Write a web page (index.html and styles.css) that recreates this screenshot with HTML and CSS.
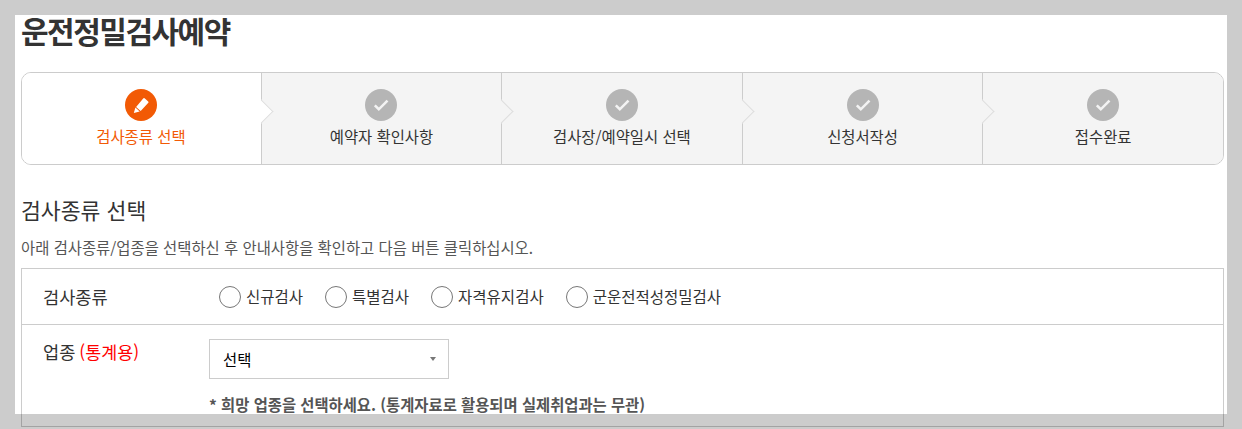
FILE: index.html
```html
<!DOCTYPE html>
<html lang="ko">
<head>
<meta charset="utf-8">
<title>운전정밀검사예약</title>
<link rel="stylesheet" href="styles.css">
</head>
<body>
<main class="page">
  <h1 class="title">운전정밀검사예약</h1>
  <ol class="steps">
    <li class="step step-active">
      <span class="step-icon">
        <svg viewBox="0 0 32 32" width="32" height="32"><path fill="#fff" d="M19.6 9.2l3.6 3.2a1 1 0 0 1 .1 1.4l-7.6 8.2-4.6-4.1 7.1-8.5a1 1 0 0 1 1.4-.2zM10.4 18.6l4.3 3.9-5.9 1.6z"/></svg>
      </span>
      <span class="step-label">검사종류 선택</span>
    </li>
    <li class="step">
      <span class="step-icon"><svg viewBox="0 0 32 32" width="32" height="32"><path fill="none" stroke="#f3f3f3" stroke-width="2.6" d="M9.8 16.4l4 3.9 8.7-8.6"/></svg></span>
      <span class="step-label">예약자 확인사항</span>
    </li>
    <li class="step">
      <span class="step-icon"><svg viewBox="0 0 32 32" width="32" height="32"><path fill="none" stroke="#f3f3f3" stroke-width="2.6" d="M9.8 16.4l4 3.9 8.7-8.6"/></svg></span>
      <span class="step-label">검사장/예약일시 선택</span>
    </li>
    <li class="step">
      <span class="step-icon"><svg viewBox="0 0 32 32" width="32" height="32"><path fill="none" stroke="#f3f3f3" stroke-width="2.6" d="M9.8 16.4l4 3.9 8.7-8.6"/></svg></span>
      <span class="step-label">신청서작성</span>
    </li>
    <li class="step">
      <span class="step-icon"><svg viewBox="0 0 32 32" width="32" height="32"><path fill="none" stroke="#f3f3f3" stroke-width="2.6" d="M9.8 16.4l4 3.9 8.7-8.6"/></svg></span>
      <span class="step-label">접수완료</span>
    </li>
  </ol>
  <h2 class="section-title">검사종류 선택</h2>
  <p class="section-desc">아래 검사종류/업종을 선택하신 후 안내사항을 확인하고 다음 버튼 클릭하십시오.</p>
  <div class="form">
    <div class="row row-type">
      <div class="row-label">검사종류</div>
      <div class="radios">
        <label class="radio"><input type="radio" name="kind"><span>신규검사</span></label>
        <label class="radio"><input type="radio" name="kind"><span>특별검사</span></label>
        <label class="radio"><input type="radio" name="kind"><span>자격유지검사</span></label>
        <label class="radio"><input type="radio" name="kind"><span>군운전적성정밀검사</span></label>
      </div>
    </div>
    <div class="row row-job">
      <div class="row-label">업종 <em class="red">(통계용)</em></div>
      <div class="job-field">
        <div class="select-wrap">
          <select class="select"><option>선택</option></select>
        </div>
        <p class="note">* 희망 업종을 선택하세요. (통계자료로 활용되며 실제취업과는 무관)</p>
      </div>
    </div>
  </div>
</main>
<div class="frame"></div>
</body>
</html>
```

FILE: styles.css
```css
* { box-sizing: border-box; }
html, body { margin: 0; padding: 0; height: 429px; overflow: hidden; background: #fff; }
body { font-family: "Noto Sans CJK KR", "Noto Sans", sans-serif; color: #333; position: relative; }

.frame {
  position: absolute;
  inset: 0;
  border: 15px solid rgba(0, 0, 0, 0.2);
  pointer-events: none;
}

.page { padding: 11px 18px 0 21px; }

.title {
  margin: 0;
  font-size: 30px;
  line-height: 38px;
  font-weight: 700;
  letter-spacing: -1.5px;
  color: #333;
}

.steps {
  list-style: none;
  margin: 23px 0 0;
  padding: 0;
  display: grid;
  grid-template-columns: 238.9px 240.1px 240.8px 240.5px 1fr;
  height: 93px;
  border: 1px solid #ccc;
  border-radius: 10px;
}
.step {
  position: relative;
  display: flex;
  flex-direction: column;
  align-items: center;
  padding-top: 16px;
  background: #f4f4f4;
  border-left: 1px solid #ccc;
}
.step:first-child { border-left: 0; padding-right: 1px; border-radius: 9px 0 0 9px; }
.step:last-child { border-radius: 0 9px 9px 0; }
.step:not(:first-child)::before {
  content: "";
  position: absolute;
  left: -9px;
  top: 30px;
  width: 16px;
  height: 16px;
  background: #f4f4f4;
  border-top: 1px solid #ddd;
  border-right: 1px solid #ddd;
  transform: rotate(45deg);
}
.step:nth-child(2)::before { background: #fff; }
.step-icon {
  width: 32px;
  height: 32px;
  border-radius: 50%;
  background: #b5b5b5;
  display: block;
}
.step-icon svg { display: block; }
.step-label {
  margin-top: 4px;
  font-size: 15.4px;
  line-height: 22px;
  color: #333;
}
.step-active { background: #fff; }
.step-active .step-icon { background: #f25a05; }
.step-active .step-label { color: #f25a05; }

.section-title {
  margin: 30px 0 0;
  font-size: 21.6px;
  line-height: 30px;
  font-weight: 400;
  color: #333;
}
.section-desc {
  margin: 11px 0 0;
  font-size: 15.4px;
  line-height: 22px;
  color: #555;
}

.form { margin-top: 10px; border: 1px solid #ccc; }
.row { display: flex; }
.row-type { height: 56px; align-items: center; border-bottom: 1px solid #ccc; }
.row-job { height: 101px; }
.row-label {
  flex: 0 0 187px;
  padding-left: 21px;
  font-size: 17.6px;
  line-height: 24px;
  color: #333;
}
.row-job .row-label { padding-top: 15px; word-spacing: -1px; }
.red { color: #f00; font-style: normal; font-size: 17.4px; }

.radios { display: flex; gap: 22px; padding-left: 10px; }
.radio { display: flex; align-items: center; gap: 5px; font-size: 15.5px; line-height: 22px; color: #333; }
.radio span { padding-bottom: 2px; }
.radio input {
  appearance: none;
  margin: 0;
  width: 22px;
  height: 22px;
  border: 1px solid #777;
  border-radius: 50%;
  background: #fff;
}

.job-field { padding-top: 14px; }
.select-wrap { position: relative; width: 240px; height: 40px; }
.select-wrap::after {
  content: "";
  position: absolute;
  right: 13px;
  top: 18px;
  border-left: 3.5px solid transparent;
  border-right: 3.5px solid transparent;
  border-top: 4px solid #777;
}
.select {
  appearance: none;
  display: block;
  width: 100%;
  height: 100%;
  padding: 0 13px;
  border: 1px solid #ccc;
  border-radius: 0;
  background: #fff;
  font: inherit;
  font-size: 15.4px;
  color: #000;
}
.note {
  margin: 14px 0 0;
  font-size: 15.37px;
  line-height: 22px;
  font-weight: 700;
  color: #555;
}
```
